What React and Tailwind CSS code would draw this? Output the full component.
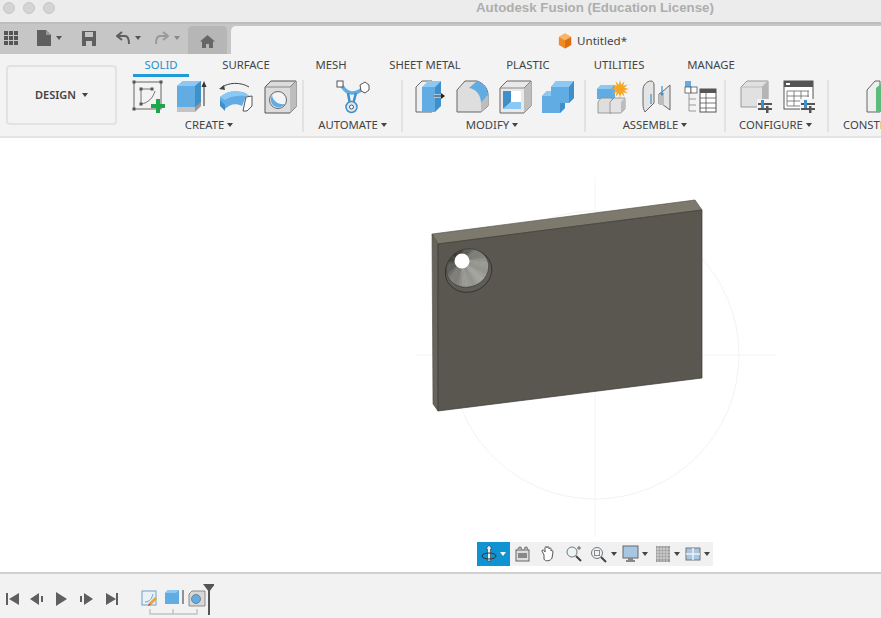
const FONT = "font-['Noto_Sans',Arial,sans-serif]";
const BLUE = "#62ace4";
const BLUE_D = "#3f8fc9";
const BLUE_L = "#8cc8f4";
const EDGE = "#555";

const Caret = ({ className = "" }) => (
  <span className={`inline-block h-0 w-0 border-x-[3px] border-t-[4px] border-x-transparent border-t-[#444] ${className}`} />
);

function Icon({ w, children }) {
  return (
    <svg width={w} height="34" viewBox={`0 0 ${w} 34`} className="block shrink-0">
      {children}
    </svg>
  );
}

const SketchIcon = () => (
  <Icon w={34}>
    <rect x="2" y="2" width="27" height="27" fill="none" stroke="#666" strokeWidth="1" />
    <path d="M9 9v15M9 9h11M9 24c7-1 12-6 14-13" fill="none" stroke="#777" strokeWidth="1" />
    {[[2, 2], [29, 2], [2, 29], [9, 9], [20, 9], [9, 24]].map(([x, y]) => (
      <rect key={`${x}-${y}`} x={x - 1.5} y={y - 1.5} width="3" height="3" fill="#555" />
    ))}
    <path d="M24 19h4v5h5v4h-5v5h-4v-5h-5v-4h5z" fill="#1ea64a" />
  </Icon>
);

const ExtrudeIcon = () => (
  <Icon w={31}>
    <path d="M0 6 6 1h18v24l-6 6H0z" fill={BLUE} />
    <path d="M0 6 6 1h18l-6 5z" fill={BLUE_L} />
    <path d="M18 6l6-5v22l-6 6z" fill={BLUE_D} />
    <path d="M0 27h18v5H0z" fill="#c4c4c4" />
    <path d="M18 27l6-5v4l-6 6z" fill="#9a9a9a" />
    <path d="M27 26V5" stroke="#333" strokeWidth="1" />
    <path d="M24.500 7 27 1l2.500 6z" fill="#333" />
  </Icon>
);

const RevolveIcon = () => (
  <Icon w={34}>
    <path d="M2 8C9 2 22 2 30 7" fill="none" stroke="#444" strokeWidth="1" />
    <path d="M0 9l5-4 1 5z" fill="#444" />
    <path d="M1 17c8-7 20-7 27-3l-5 12C17 23 11 24 6 29L1 25z" fill={BLUE} />
    <path d="M1 17c8-7 20-7 27-3l4 3c-6-2-19-2-26 3z" fill={BLUE_L} />
    <path d="M1 20v6l5 5v-6z" fill={BLUE_D} />
    <path d="M27 17l6-1v10l-5 5h-4z" fill="#fff" stroke="#555" strokeWidth="1" />
  </Icon>
);

const HoleIcon = () => (
  <Icon w={33}>
    <path d="M1 7 7 1h25v26l-6 6H1z" fill="#dcdcdc" stroke={EDGE} strokeWidth="1" />
    <path d="M26 7l6-6v26l-6 6z" fill="#bdbdbd" />
    <path d="M1 7h25l6-6" fill="none" stroke="#888" strokeWidth="1" />
    <circle cx="14" cy="20" r="8.500" fill="#f4f4f4" stroke="#666" strokeWidth="1" />
    <path d="M8 15c1 6 6 10 13 9a7 7 0 1 1-13-9z" fill={BLUE} />
  </Icon>
);

const AutomateIcon = () => (
  <Icon w={34}>
    <path d="M6 6C9 11 12 13 16 13S24 11 26 9" fill="none" stroke={BLUE} strokeWidth="3.500" />
    <path d="M12 13l2 11M20 13l-3 11" stroke={BLUE_D} strokeWidth="2.500" fill="none" />
    <rect x="1" y="1" width="6" height="6" fill="#fff" stroke="#555" />
    <path d="M24 5l5-3 4 3v5l-4 3-4-2z" fill="#fff" stroke="#555" />
    <circle cx="15.500" cy="27" r="5.500" fill="#dbe9f3" stroke={BLUE_D} strokeWidth="1.500" />
    <circle cx="15.500" cy="27" r="2" fill="#fff" stroke="#555" />
  </Icon>
);

const PressPullIcon = () => (
  <Icon w={31}>
    <path d="M1 32V7l6-6h10v31z" fill="#efefef" stroke="#666" strokeWidth="1" />
    <path d="M7 7h13v25H7z" fill={BLUE} />
    <path d="M7 7l6-6h13l-6 6z" fill={BLUE_L} />
    <path d="M20 7l6-6v25l-6 6z" fill={BLUE_D} />
    <path d="M19 16h8" stroke="#fff" strokeWidth="3" />
    <path d="M19 16h8" stroke="#222" strokeWidth="1.200" />
    <path d="M26 13l4 3-4 3z" fill="#222" />
  </Icon>
);

const FilletIcon = () => (
  <Icon w={33}>
    <path d="M1 32V10L9 1h12c6 2 11 7 11 14v11l-7 6z" fill="#dedede" stroke="#666" strokeWidth="1" />
    <path d="M13 8l8-7c6 2 11 7 11 14l-7 8c0-8-5-14-12-15z" fill={BLUE} />
    <path d="M25 32v-9l7-8v11z" fill="#bdbdbd" />
  </Icon>
);

const ShellIcon = () => (
  <Icon w={33}>
    <path d="M1 8l7-7h24v25l-7 7H1z" fill="#e9e9e9" stroke="#666" strokeWidth="1" />
    <path d="M25 8l7-7v25l-7 7z" fill="#bdbdbd" />
    <path d="M1 8h24l7-7" fill="none" stroke="#888" />
    <rect x="4" y="11" width="18" height="18" fill="#fff" />
    <path d="M4 11h8v11l-8 7z" fill={BLUE_D} />
    <path d="M12 22h10v7H4z" fill={BLUE_L} />
  </Icon>
);

const CombineIcon = () => (
  <Icon w={33}>
    <path d="M9 7l5-6h18v17l-5 5H9z" fill={BLUE} />
    <path d="M9 7l5-6h18l-5 6z" fill={BLUE_L} />
    <path d="M27 7l5-6v17l-5 5z" fill={BLUE_D} />
    <path d="M0 16l5-5h18v17l-5 5H0z" fill={BLUE} />
    <path d="M0 16l5-5h4v5z" fill={BLUE_L} />
    <path d="M18 23h5v5l-5 5z" fill={BLUE_D} />
  </Icon>
);

const STAR = Array.from({ length: 24 }, (_, i) => {
  const a = (i / 24) * Math.PI * 2;
  const r = i % 2 ? 4.5 : 9;
  return `${(23 + Math.cos(a) * r).toFixed(1)},${(9 + Math.sin(a) * r).toFixed(1)}`;
}).join(" ");

const NewComponentIcon = () => (
  <Icon w={33}>
    <path d="M0 9l4-4h14v14H0z" fill={BLUE} />
    <path d="M0 9l4-4h14l-4 4z" fill={BLUE_L} />
    <path d="M1 22l3-4h11v15H1z" fill="#dedede" stroke="#888" strokeWidth=".8" />
    <path d="M13 22l4-4h11v11l-4 4H13z" fill="#e3e3e3" stroke="#888" strokeWidth=".8" />
    <path d="M24 22l4-4v11l-4 4z" fill="#bdbdbd" />
    <polygon points={STAR} fill="#f5a623" />
  </Icon>
);

const JointIcon = () => (
  <Icon w={30}>
    <path d="M1 10c0-5 4-9 8-9 2 0 3 2 3 4v18l-9 9c-1-2-2-4-2-8z" fill="#e4e4e4" stroke="#666" strokeWidth="1" />
    <path d="M28 5v25l-8-6h-3V14l3-2z" fill="#e4e4e4" stroke="#666" strokeWidth="1" />
    <path d="M17 14h5v11h-5z" fill="#bdbdbd" />
    <path d="M9 14v10M20 6v9" stroke={BLUE_D} strokeWidth="1.200" />
    <path d="M18 13l2 3 2-3z" fill={BLUE_D} />
  </Icon>
);

const TableIcon = () => (
  <Icon w={33}>
    <rect x="1" y="1" width="6" height="6" fill={BLUE} />
    <rect x="1" y="7" width="6" height="6" fill="#fff" stroke="#555" strokeWidth=".8" />
    <rect x="7" y="7" width="6" height="6" fill="#fff" stroke="#555" strokeWidth=".8" />
    <path d="M5 13v18M5 19h7M5 25h7M5 31h7" stroke="#999" strokeWidth="1" fill="none" />
    <rect x="16" y="9" width="16" height="23" fill="#fff" stroke="#555" strokeWidth="1" />
    <rect x="16" y="9" width="16" height="4" fill="#555" />
    <path d="M16 18h16M16 23h16M16 28h16M22 13v19" stroke="#555" strokeWidth=".8" />
  </Icon>
);

const Sliders = ({ x }) => (
  <g transform={`translate(${x} 0)`}>
    <path d="M0 24h14M0 29h14" stroke="#555" strokeWidth="2" />
    <rect x="3" y="20" width="3" height="8" fill={BLUE_D} />
    <rect x="8" y="26" width="2.500" height="7" fill="#555" />
  </g>
);

const ParamIcon = () => (
  <Icon w={33}>
    <path d="M1 27V7l6-6h21v21l-6 5z" fill="#e1e1e1" stroke="#999" strokeWidth="1" />
    <path d="M22 7l6-6v21l-6 5z" fill="#b5b5b5" />
    <path d="M1 7h21l6-6" fill="none" stroke="#bbb" />
    <rect x="17" y="19" width="16" height="15" fill="#f3f3f3" />
    <Sliders x={18} />
  </Icon>
);

const ConfigTableIcon = () => (
  <Icon w={33}>
    <rect x="1" y="1" width="29" height="28" fill="#fff" stroke="#555" strokeWidth="1" />
    <rect x="1" y="1" width="29" height="6" fill="#555" />
    <rect x="3" y="3" width="4" height="2" fill="#fff" />
    <path d="M4 11h22M4 16h22M4 21h16M4 26h14M4 11v15M11 11v15M18 11v15M25 11v6" stroke="#666" strokeWidth=".8" fill="none" />
    <rect x="17" y="19" width="16" height="15" fill="#f3f3f3" />
    <Sliders x={18} />
  </Icon>
);

const ConstructIcon = () => (
  <Icon w={33}>
    <path d="M1 32V10L9 1h5v31z" fill="#efefef" stroke="#666" strokeWidth="1" />
    <path d="M10 32V8l8-7h15v24l-8 7z" fill="#5dbb7c" />
  </Icon>
);

const GROUPS = [
  { label: "CREATE", width: 179, pad: 7, gap: 11, labelRight: 9, icons: [SketchIcon, ExtrudeIcon, RevolveIcon, HoleIcon] },
  { label: "AUTOMATE", width: 99, pad: 32, gap: 0, labelRight: 0, icons: [AutomateIcon] },
  { label: "MODIFY", width: 183, pad: 12, gap: 10, labelRight: 3, icons: [PressPullIcon, FilletIcon, ShellIcon, CombineIcon] },
  { label: "ASSEMBLE", width: 140, pad: 11, gap: 12, labelRight: 0, icons: [NewComponentIcon, JointIcon, TableIcon] },
  { label: "CONFIGURE", width: 103, pad: 14, gap: 10, labelRight: 2, icons: [ParamIcon, ConfigTableIcon] },
];

const TABS = [
  { name: "SOLID", w: "w-[56px]", active: true },
  { name: "SURFACE", w: "w-[60px] ml-[27px]" },
  { name: "MESH", w: "w-[40px] ml-[35px]" },
  { name: "SHEET METAL", w: "w-[80px] ml-[34px]" },
  { name: "PLASTIC", w: "w-[50px] ml-[38px]" },
  { name: "UTILITIES", w: "w-[60px] ml-[36px]" },
  { name: "MANAGE", w: "w-[60px] ml-[32px]" },
];

function RibbonGroup({ group }) {
  return (
    <div style={{ width: group.width }} className="mt-[3px] flex h-[52px] shrink-0 flex-col border-r-2 border-[#e2e2e2]">
      <div style={{ paddingLeft: group.pad, gap: group.gap }} className="flex h-[38px]">
        {group.icons.map((Ic, i) => (
          <Ic key={i} />
        ))}
      </div>
      <div style={{ paddingRight: group.labelRight }} className="flex items-center justify-center gap-[3px] text-[11.3px] leading-[14px] text-[#444]">
        {group.label}
        <Caret />
      </div>
    </div>
  );
}

function QuickBar() {
  return (
    <div className="flex h-[30px] w-[231px] shrink-0 items-center bg-[#c6c6c6] pb-[2px] pl-[4px]">
      <svg width="15" height="15" viewBox="0 0 15 15" className="shrink-0">
        {[0, 5, 10].map((y) =>
          [0, 5, 10].map((x) => <rect key={`${x}${y}`} x={x} y={y} width="4" height="4" fill="#555" />)
        )}
      </svg>
      <svg width="14" height="16" viewBox="0 0 14 16" className="ml-[18px] shrink-0">
        <path d="M0 0h9l5 5v11H0z" fill="#5f5f5f" />
        <path d="M9 0l5 5H9z" fill="#999" />
      </svg>
      <Caret className="ml-[5px] border-t-[#555]" />
      <svg width="14" height="15" viewBox="0 0 14 15" className="ml-[20px] shrink-0">
        <path d="M0 0h14v15H0z" fill="#5f5f5f" />
        <path d="M3 1h8v5H3zM4 10h6v5H4z" fill="#c6c6c6" />
      </svg>
      <svg width="15" height="14" viewBox="0 0 15 14" className="ml-[20px] shrink-0">
        <path d="M6 1 1 5l5 4M1 5h8c3 0 4 3 4 8" fill="none" stroke="#5f5f5f" strokeWidth="2" />
      </svg>
      <Caret className="ml-[4px] border-t-[#555]" />
      <svg width="15" height="14" viewBox="0 0 15 14" className="ml-[13px] shrink-0">
        <path d="M9 1l5 4-5 4M14 5H6C3 5 2 8 2 13" fill="none" stroke="#999" strokeWidth="2" />
      </svg>
      <Caret className="ml-[5px] border-t-[#888]" />
      <div className="ml-[8px] -mb-[2px] flex h-[28px] w-[39px] shrink-0 items-center justify-center self-end rounded-t-[4px] bg-[#b6b6b6]">
        <svg width="15" height="13" viewBox="0 0 15 13" className="mt-[2px]">
          <path d="M7.500 0 15 6.500h-2V13H9V9H6v4H2V6.500H0z" fill="#666" />
        </svg>
      </div>
    </div>
  );
}

// countersink shading: one wedge per step around the hole
const WEDGES = Array.from({ length: 48 }, (_, i) => {
  const a = (i / 48) * Math.PI * 2;
  const b = ((i + 1.2) / 48) * Math.PI * 2;
  const v = Math.round(112 + 48 * Math.cos(a - 0.7) + 8 * Math.cos(a * 9));
  return { a, b, fill: `rgb(${v},${v},${v - 6})` };
});

function Model() {
  return (
    <svg viewBox="0 138 881 434" className="block h-full w-full">
      <defs>
        <clipPath id="coneClip">
          <ellipse cx="467.500" cy="268" rx="21.500" ry="19" transform="rotate(-20 467.500 268)" />
        </clipPath>
      </defs>
      <circle cx="595" cy="355" r="144" fill="none" stroke="#f3f3f3" />
      <path d="M416 355h359M595 177v360" stroke="#f4f4f4" />

      <path d="M432 234 695 200l7 10-264 34z" fill="#7d796d" stroke="#4c4a43" strokeWidth=".6" />
      <path d="M432 234l6 10v167l-5-7z" fill="#67645b" stroke="#4c4a43" strokeWidth=".6" />
      <path d="M438 244l264-34v168l-264 33z" fill="#5a5750" stroke="#3b3a35" strokeWidth=".7" />

      <ellipse cx="468.500" cy="271" rx="23.500" ry="21" transform="rotate(-20 468.500 271)" fill="#5f5d55" stroke="#2f2e2a" strokeWidth=".8" />
      <g clipPath="url(#coneClip)">
        {WEDGES.map((w, i) => (
          <path
            key={i}
            d={`M462 261L${462 + Math.cos(w.a) * 50} ${261 + Math.sin(w.a) * 50}L${462 + Math.cos(w.b) * 50} ${261 + Math.sin(w.b) * 50}z`}
            fill={w.fill}
          />
        ))}
      </g>
      <ellipse cx="467.500" cy="268" rx="21.500" ry="19" transform="rotate(-20 467.500 268)" fill="none" stroke="#3a3934" strokeWidth=".6" />
      <circle cx="462" cy="261" r="7.500" fill="#fff" />
    </svg>
  );
}

function NavIcon({ children, w = 18 }) {
  return (
    <svg width={w} height="18" viewBox={`0 0 ${w} 18`} className="block shrink-0">
      {children}
    </svg>
  );
}

function NavBar() {
  return (
    <div className="absolute left-[477px] top-[404px] flex h-[24px] items-center bg-[#f1f1f1]">
      <div className="flex h-[24px] w-[33px] items-center gap-[3px] bg-[#0f93d2] pl-[4px]">
        <NavIcon w={16}>
          <path d="M8 0 11 4H9.500v12h-3V4H5z" fill="#e8f4fa" stroke="#333" strokeWidth=".6" />
          <ellipse cx="8" cy="11" rx="7" ry="3" fill="none" stroke="#333" />
        </NavIcon>
        <span className="h-0 w-0 border-x-[3px] border-t-[4px] border-x-transparent border-t-white" />
      </div>
      <div className="ml-[4px]">
        <NavIcon>
          <rect x="2" y="5" width="13" height="11" fill="#ddd" stroke="#666" />
          <rect x="4" y="8" width="9" height="5" fill="#888" />
          <path d="M3 5l2-3h2l1 3M10 5l1-3h2l1 3" fill="#aaa" stroke="#666" strokeWidth=".7" />
        </NavIcon>
      </div>
      <div className="ml-[7px]">
        <NavIcon>
          <path d="M5 10 3 6c0-2 2-1 3 1V3c0-2 2-2 2 0 0-2 2-2 2 0v1c1-2 2-1 2 0v2c1-1 2-1 2 1l-1 6c-1 3-7 4-8 1z" fill="#fff" stroke="#555" />
        </NavIcon>
      </div>
      <div className="ml-[8px]">
        <NavIcon>
          <circle cx="7" cy="7" r="5" fill="#eef3f6" stroke="#777" />
          <path d="M11 11l5 5" stroke="#444" strokeWidth="2" />
          <path d="M14 1v4M12 3h4" stroke="#666" />
        </NavIcon>
      </div>
      <div className="ml-[7px]">
        <NavIcon>
          <circle cx="7" cy="8" r="5.500" fill="#eef3f6" stroke="#777" />
          <rect x="4.500" y="5.500" width="5" height="5" fill="none" stroke="#888" />
          <path d="M11 12l5 5" stroke="#444" strokeWidth="2" />
        </NavIcon>
      </div>
      <Caret className="ml-[3px]" />
      <div className="ml-[5px]">
        <NavIcon>
          <rect x="1" y="1" width="15" height="12" fill="#a6c6e2" stroke="#666" />
          <path d="M6 13h5v2H6zM4 15h9v2H4z" fill="#888" />
        </NavIcon>
      </div>
      <Caret className="ml-[2px]" />
      <div className="ml-[7px]">
        <NavIcon w={16}>
          <rect x="1" y="1" width="14" height="16" fill="#999" />
          <path d="M3 1v16M6 1v16M9 1v16M12 1v16M1 4h14M1 7h14M1 10h14M1 13h14" stroke="#ddd" strokeWidth=".8" />
        </NavIcon>
      </div>
      <Caret className="ml-[3px]" />
      <div className="ml-[5px]">
        <NavIcon w={16}>
          <rect x="1" y="3" width="14" height="12" fill="#a6c6e2" stroke="#777" />
          <path d="M8 3v12M1 9h14" stroke="#f1f1f1" strokeWidth="1.500" />
        </NavIcon>
      </div>
      <Caret className="ml-[3px] mr-[3px]" />
    </div>
  );
}

function Timeline() {
  const tri = "#5f5f5f";
  return (
    <div className="flex h-[44px] items-center bg-[#f2f2f2] pl-[6px]">
      <svg width="208" height="44" viewBox="0 0 208 44" className="shrink-0">
        <g fill={tri}>
          <path d="M0 19h2v12H0zM13 19v12L3 25z" />
          <path d="M24 25l9-6v12zM35 22h2v6h-2z" />
          <path d="M50 18l11 7-11 7z" />
          <path d="M74 22h2v6h-2zM78 19l9 6-9 6z" />
          <path d="M100 19l10 6-10 6zM110 19h2v12h-2z" />
        </g>
        <g>
          <rect x="136" y="17" width="14" height="14" fill="#e9f1f7" stroke="#6aa2cc" />
          <path d="M139 28c5 0 7-4 8-8" fill="none" stroke="#6aa2cc" />
          <path d="M149 23l-6 6 2 2 6-6z" fill="#e8a33b" />
          <path d="M145 31l-2-2-1 3z" fill="#d94c3a" />
          <path d="M159 19l3-3h11v14h-14z" fill={BLUE} />
          <path d="M159 19l3-3h11l-3 3z" fill={BLUE_L} />
          <path d="M177 16v14" stroke="#333" />
          <path d="M183 20l3-3h13v15h-16z" fill="#d8d8d8" stroke="#777" strokeWidth=".8" />
          <circle cx="190" cy="25" r="4.500" fill={BLUE} stroke="#666" strokeWidth=".7" />
        </g>
        <path d="M144 35v5h47v-5M167 35v5" fill="none" stroke="#c4c4c4" strokeWidth="1.500" />
        <path d="M197 10h12l-6 8z" fill="#555" />
        <path d="M203 14v27" stroke="#555" strokeWidth="2" />
      </svg>
    </div>
  );
}

export default function App() {
  return (
    <div className={`flex h-[618px] w-[881px] flex-col overflow-hidden bg-white ${FONT}`}>
      {/* title bar */}
      <div className="flex h-[24px] shrink-0 items-center border-b-2 border-[#bdbdbd] bg-[#ececec] pb-[6px] pl-[3px]">
        <div className="flex gap-[8px]">
          <span className="h-[12px] w-[12px] rounded-full border border-[#c6c6c6] bg-[#d4d4d4]" />
          <span className="h-[12px] w-[12px] rounded-full border border-[#c6c6c6] bg-[#d4d4d4]" />
          <span className="h-[12px] w-[12px] rounded-full border border-[#c6c6c6] bg-[#d4d4d4]" />
        </div>
        <span className="ml-[421px] whitespace-nowrap font-['Liberation_Sans',Arial,sans-serif] text-[13.3px] font-bold text-[#aeaeae]">
          Autodesk Fusion (Education License)
        </span>
      </div>

      {/* document tab row */}
      <div className="flex h-[30px] shrink-0 bg-[#c6c6c6]">
        <QuickBar />
        <div className="mt-[2px] flex flex-1 items-center rounded-tl-[5px] bg-[#f3f3f3] pl-[327px] pt-[2px]">
          <svg width="14" height="16" viewBox="0 0 16 17" className="shrink-0">
            <path d="M8 0l7 4v9l-7 4-7-4V4z" fill="#f08a24" />
            <path d="M8 0l7 4-7 4-7-4z" fill="#fbb565" />
            <path d="M8 8l7-4v9l-7 4z" fill="#dc6f12" />
          </svg>
          <span className="ml-[5px] text-[11.6px] text-[#444]">Untitled*</span>
        </div>
      </div>

      {/* ribbon */}
      <div className="flex h-[84px] shrink-0 border-b-2 border-[#e4e4e4] bg-[#f3f3f3]">
        <div className="flex w-[125px] shrink-0 items-start pl-[6px] pt-[11px]">
          <div className="flex h-[60px] w-[111px] items-center justify-center gap-[6px] rounded-[4px] border-2 border-[#e2e2e2] text-[11px] font-semibold text-[#444]">
            DESIGN
            <Caret />
          </div>
        </div>
        <div className="flex min-w-0 flex-1 flex-col">
          <div className="flex h-[23px] shrink-0 pl-[8px] pt-[4px]">
            {TABS.map((t) => (
              <div
                key={t.name}
                className={`h-[19px] shrink-0 whitespace-nowrap text-center text-[11.3px] leading-[14px] ${t.w} ${
                  t.active ? "border-b-[3px] border-[#1f9bd7] text-[#1f8fc9]" : "text-[#444]"
                }`}
              >
                {t.name}
              </div>
            ))}
          </div>
          <div className="flex">
            {GROUPS.map((g) => (
              <RibbonGroup key={g.label} group={g} />
            ))}
            <div className="mt-[3px] flex shrink-0 flex-col">
              <div className="flex h-[38px] pl-[37px]">
                <ConstructIcon />
              </div>
              <div className="whitespace-nowrap pl-[14px] text-[11.3px] leading-[14px] text-[#444]">CONSTRUCT</div>
            </div>
          </div>
        </div>
      </div>

      {/* canvas */}
      <div className="relative min-h-0 flex-1 bg-white">
        <Model />
        <NavBar />
      </div>

      {/* timeline */}
      <div className="h-[2px] shrink-0 bg-[#cfcfcf]" />
      <Timeline />
    </div>
  );
}
